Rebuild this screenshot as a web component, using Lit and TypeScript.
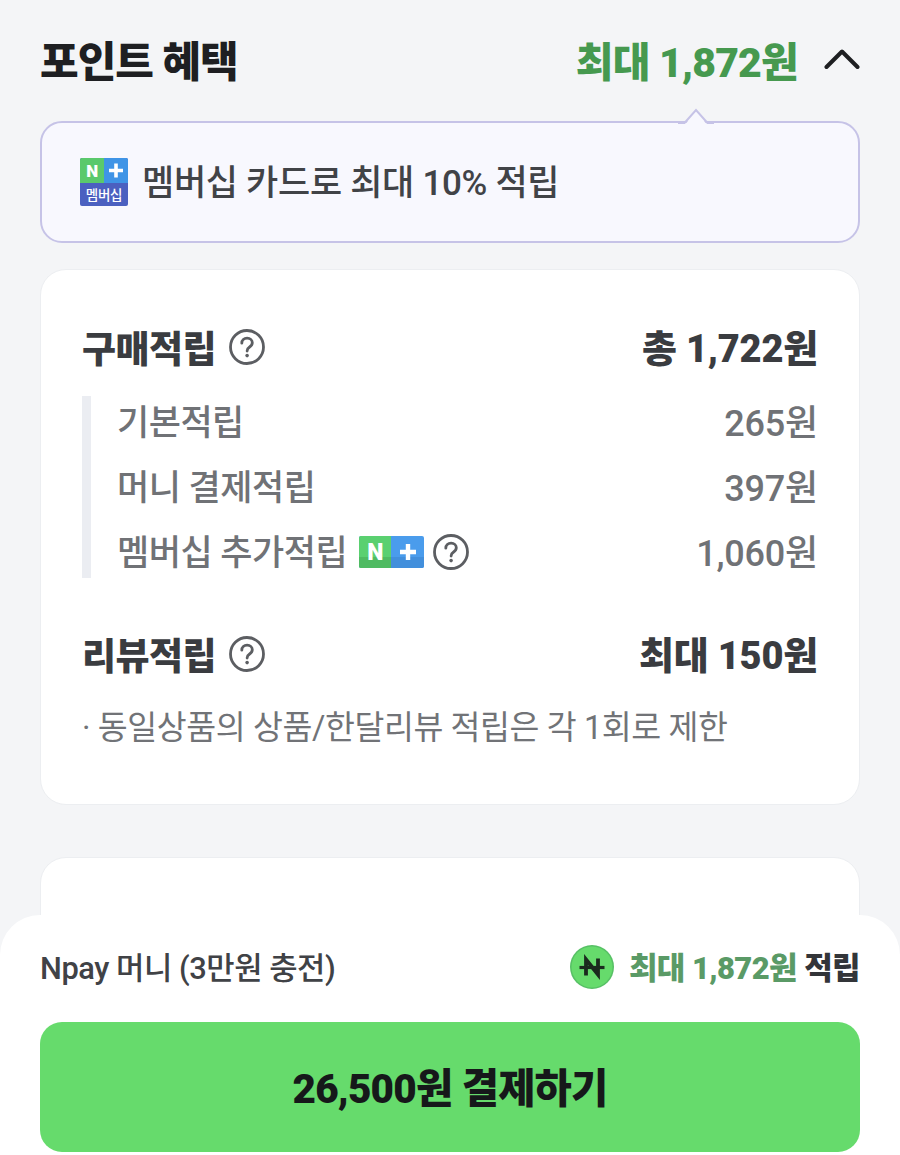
import { LitElement, html, css } from 'lit';
import { customElement } from 'lit/decorators.js';

const helpIcon = html`<svg class="help" viewBox="0 0 36 36" fill="none">
   <circle cx="18" cy="18" r="16.5" stroke="#5c5e62" stroke-width="2.8"></circle>
   <path d="M12.8 14.2c0-3 2.3-5 5.3-5s5.2 1.9 5.2 4.6c0 2-1 3.1-2.7 4.2-1.7 1.1-2.5 2-2.5 4" stroke="#5c5e62" stroke-width="2.8" stroke-linecap="round"></path>
   <circle cx="18.1" cy="26.6" r="1.8" fill="#5c5e62"></circle>
</svg>`;

const plusBadge = html`<svg class="plus-badge" viewBox="0 0 65 32">
   <rect width="65" height="32" rx="2" fill="#4a9cec"></rect>
   <path d="M2 0h30v32H2a2 2 0 0 1-2-2V2a2 2 0 0 1 2-2z" fill="#5ad070"></path>
   <path d="M0 21h32v11H2a2 2 0 0 1-2-2z" fill="#4fbb62"></path>
   <path d="M32 21h33v9a2 2 0 0 1-2 2H32z" fill="#428fdc"></path>
   <text x="16" y="24" text-anchor="middle" class="badge-n" font-size="23">N</text>
   <path d="M41 16h16M49 8v16" stroke="#fff" stroke-width="4.4"></path>
</svg>`;

const memberBadge = html`<svg class="member-badge" viewBox="0 0 48 48">
   <rect width="48" height="48" rx="2" fill="#4b60c0"></rect>
   <path d="M2 0h22v25H0V2a2 2 0 0 1 2-2z" fill="#5ac96c"></path>
   <path d="M24 0h22a2 2 0 0 1 2 2v23H24z" fill="#3f94e6"></path>
   <text x="12" y="19" text-anchor="middle" class="badge-n" font-size="17">N</text>
   <path d="M29 12.500h14M36 5.500v14" stroke="#fff" stroke-width="3.6"></path>
   <text x="24" y="42" text-anchor="middle" class="badge-sub" font-size="13.500">멤버십</text>
</svg>`;

const npayIcon = html`<svg class="npay" viewBox="0 0 44 44">
   <circle cx="22" cy="22" r="22" fill="#57c065"></circle>
   <circle cx="22" cy="22" r="20.500" fill="#66db6c"></circle>
   <path d="M16 30.500V14.500L28 29.500V13.500" fill="none" stroke="#1b2a1e" stroke-width="3.800"></path>
   <path d="M9.500 22.500h25" stroke="#1b2a1e" stroke-width="3.200"></path>
</svg>`;

@customElement('app-root')
export class AppRoot extends LitElement {
   static styles = css`
      :host {
         display: block;
         position: relative;
         height: 1155px;
         overflow: hidden;
         background-color: #f4f5f7;
         font-family: Roboto, 'Noto Sans CJK KR', sans-serif;
         color: #45474b;
      }
      .content {
         display: flex;
         flex-direction: column;
         padding: 0 40px;
      }
      .header {
         display: flex;
         align-items: center;
         justify-content: space-between;
         height: 121px;
         padding-bottom: 4px;
         box-sizing: border-box;
      }
      .title {
         font-size: 42px;
         font-weight: 900;
         letter-spacing: -1px;
         color: #1e1f22;
      }
      .summary {
         display: flex;
         align-items: center;
         gap: 26px;
      }
      .summary-value {
         font-size: 41px;
         font-weight: 900;
         letter-spacing: -0.8px;
         color: #46994f;
      }
      .chevron {
         width: 36px;
         height: 22px;
      }
      .notice {
         position: relative;
         display: flex;
         align-items: center;
         gap: 14px;
         height: 122px;
         box-sizing: border-box;
         padding: 0 38px;
         background-color: #f8f8fe;
         border: 2px solid #c6c3e7;
         border-radius: 22px;
         font-size: 35px;
         font-weight: 500;
         letter-spacing: -0.3px;
         color: #414347;
      }
      .notice > span {
         margin-top: -5px;
      }
      .tail {
         position: absolute;
         top: -15px;
         left: 636px;
         width: 36px;
         height: 16px;
      }
      .member-badge {
         width: 48px;
         height: 48px;
         flex: none;
      }
      .badge-n {
         font-family: Roboto, sans-serif;
         font-weight: 900;
         fill: #fff;
      }
      .badge-sub {
         font-family: 'Noto Sans CJK KR', sans-serif;
         font-weight: 500;
         fill: #fff;
      }
      .card {
         background-color: #fff;
         border: 1px solid #eceef1;
         border-radius: 26px;
         box-sizing: border-box;
      }
      .points {
         margin-top: 26px;
         height: 536px;
         padding: 52px 41px 0;
      }
      .row {
         display: flex;
         align-items: center;
         justify-content: space-between;
         height: 50px;
      }
      .row-label {
         display: flex;
         align-items: center;
         gap: 13px;
      }
      .main {
         font-size: 37px;
         font-weight: 900;
         letter-spacing: -0.5px;
         color: #3a3c40;
      }
      .main .value {
         margin-top: -3px;
         font-size: 38px;
         letter-spacing: -0.2px;
      }
      .help {
         width: 36px;
         height: 36px;
         flex: none;
      }
      .details {
         display: flex;
         flex-direction: column;
         margin-top: 24px;
         padding-left: 26px;
         border-left: 9px solid #ebedf2;
         height: 182px;
         box-sizing: border-box;
      }
      .sub {
         height: 65px;
         flex: none;
         margin-top: -9px;
         margin-bottom: 9px;
         font-size: 35px;
         font-weight: 500;
         letter-spacing: -0.5px;
         color: #707276;
      }
      .sub .value {
         font-size: 36px;
         letter-spacing: -0.2px;
      }
      .sub .row-label {
         gap: 12px;
      }
      .sub .row-label svg {
         margin-top: 4px;
      }
      .sub .row-label svg + svg {
         margin-left: -3px;
      }
      .plus-badge {
         width: 65px;
         height: 32px;
         flex: none;
      }
      .review {
         margin-top: 51px;
      }
      .note {
         margin-top: 27px;
         font-size: 32.500px;
         letter-spacing: -0.4px;
         line-height: 44px;
         white-space: nowrap;
         color: #717377;
      }
      .next {
         margin-top: 52px;
         height: 300px;
      }
      .sheet {
         position: absolute;
         left: 0;
         right: 0;
         top: 915px;
         bottom: 0;
         box-sizing: border-box;
         padding: 30px 40px 0;
         background-color: #fff;
         border-radius: 40px 40px 0 0;
      }
      .pay-row {
         display: flex;
         align-items: center;
         justify-content: space-between;
         height: 44px;
      }
      .pay-method {
         margin-top: -3px;
         font-size: 30.800px;
         font-weight: 500;
         letter-spacing: -0.45px;
         color: #404246;
      }
      .pay-reward {
         display: flex;
         align-items: center;
         gap: 15px;
         font-size: 31px;
         font-weight: 900;
         letter-spacing: -0.6px;
         color: #333539;
      }
      .pay-reward > span {
         margin-top: -3px;
      }
      .pay-reward em {
         font-style: normal;
         color: #5a9a66;
      }
      .npay {
         width: 44px;
         height: 44px;
         flex: none;
      }
      button {
         display: block;
         width: 100%;
         height: 130px;
         margin-top: 33px;
         padding: 0 0 4px;
         border: none;
         border-radius: 22px;
         background-color: #66db6c;
         font-family: inherit;
         font-size: 40.500px;
         font-weight: 900;
         letter-spacing: -0.8px;
         color: #16181a;
      }
   `;

   render() {
      return html`
         <div class="content">
            <div class="header">
               <div class="title">포인트 혜택</div>
               <div class="summary">
                  <span class="summary-value">최대 1,872원</span>
                  <svg class="chevron" viewBox="0 0 36 22" fill="none">
                     <path d="M2.500 19L18 3.500 33.500 19" stroke="#1e1f22" stroke-width="4" stroke-linecap="round" stroke-linejoin="round"></path>
                  </svg>
               </div>
            </div>
            <div class="notice">
               <svg class="tail" viewBox="0 0 36 16">
                  <path d="M0 15.500h8L18 2l10 13.500h8V16H0z" fill="#f8f8fe"></path>
                  <path d="M0 15h6.500L18 2l11.500 13H36" fill="none" stroke="#c6c3e7" stroke-width="2"></path>
               </svg>
               ${memberBadge}
               <span>멤버십 카드로 최대 10% 적립</span>
            </div>
            <div class="card points">
               <div class="row main">
                  <span class="row-label">구매적립 ${helpIcon}</span>
                  <span class="value">총 1,722원</span>
               </div>
               <div class="details">
                  <div class="row sub"><span>기본적립</span><span class="value">265원</span></div>
                  <div class="row sub"><span>머니 결제적립</span><span class="value">397원</span></div>
                  <div class="row sub">
                     <span class="row-label">멤버십 추가적립 ${plusBadge} ${helpIcon}</span>
                     <span class="value">1,060원</span>
                  </div>
               </div>
               <div class="row main review">
                  <span class="row-label">리뷰적립 ${helpIcon}</span>
                  <span class="value">최대 150원</span>
               </div>
               <div class="note">· 동일상품의 상품/한달리뷰 적립은 각 1회로 제한</div>
            </div>
            <div class="card next"></div>
         </div>
         <div class="sheet">
            <div class="pay-row">
               <span class="pay-method">Npay 머니 (3만원 충전)</span>
               <span class="pay-reward">${npayIcon}<span><em>최대 1,872원</em> 적립</span></span>
            </div>
            <button>26,500원 결제하기</button>
         </div>
      `;
   }
}
